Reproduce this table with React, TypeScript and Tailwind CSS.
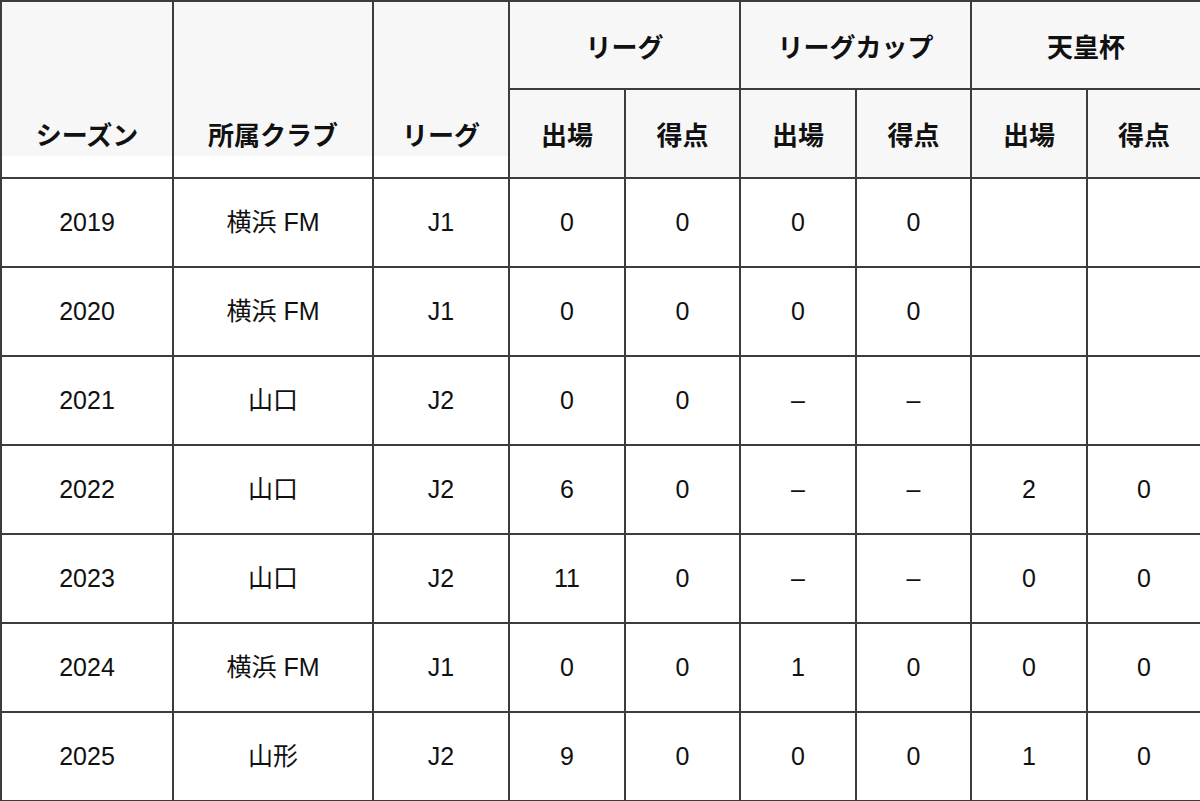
// Season-by-season appearance table (リーグ / リーグカップ / 天皇杯).
// Header cells use a light grey fill; data rows are plain white.

type Row = {
  season: string;
  club: string;
  league: string;
  stats: string[]; // 出場, 得点 × 3 competitions
};

const rows: Row[] = [
  { season: "2019", club: "横浜 FM", league: "J1", stats: ["0", "0", "0", "0", "", ""] },
  { season: "2020", club: "横浜 FM", league: "J1", stats: ["0", "0", "0", "0", "", ""] },
  { season: "2021", club: "山口", league: "J2", stats: ["0", "0", "–", "–", "", ""] },
  { season: "2022", club: "山口", league: "J2", stats: ["6", "0", "–", "–", "2", "0"] },
  { season: "2023", club: "山口", league: "J2", stats: ["11", "0", "–", "–", "0", "0"] },
  { season: "2024", club: "横浜 FM", league: "J1", stats: ["0", "0", "1", "0", "0", "0"] },
  { season: "2025", club: "山形", league: "J2", stats: ["9", "0", "0", "0", "1", "0"] },
];

const widths = [172, 200, 136, 116, 115, 116, 115, 116, 114];

const cell = "border-2 border-[#3c3c3c] p-0 text-center align-middle";

function SpanHead({ label }: { label: string }) {
  // rowspan header: grey fill stops a little short of the bottom line
  return (
    <th rowSpan={2} className={`${cell} bg-white align-top`}>
      <div className="flex h-[154px] items-end justify-center bg-[#f7f7f7] pb-[9px] leading-[26px]">
        {label}
      </div>
    </th>
  );
}

export default function App() {
  return (
    <div
      className="h-[801px] w-[1200px] overflow-hidden bg-white text-[#111]"
      style={{ fontFamily: '"Liberation Sans", "Noto Sans CJK JP", sans-serif' }}
    >
      <table className="w-[1200px] table-fixed border-collapse">
        <colgroup>
          {widths.map((w, i) => (
            <col key={i} style={{ width: w }} />
          ))}
        </colgroup>
        <thead
          className="text-[26px] font-bold"
          style={{ fontFamily: '"Noto Sans CJK JP", sans-serif' }}
        >
          <tr className="h-[88px]">
            <SpanHead label="シーズン" />
            <SpanHead label="所属クラブ" />
            <SpanHead label="リーグ" />
            <th colSpan={2} className={`${cell} bg-[#f7f7f7]`}>リーグ</th>
            <th colSpan={2} className={`${cell} bg-[#f7f7f7]`}>リーグカップ</th>
            <th colSpan={2} className={`${cell} bg-[#f7f7f7]`}>天皇杯</th>
          </tr>
          <tr className="h-[89px]">
            {["出場", "得点", "出場", "得点", "出場", "得点"].map((t, i) => (
              <th key={i} className={`${cell} bg-[#f7f7f7]`}>
                {t}
              </th>
            ))}
          </tr>
        </thead>
        <tbody className="text-[25px]">
          {rows.map((r) => (
            <tr key={r.season} className="h-[89px]">
              <td className={cell}>{r.season}</td>
              <td className={cell}>{r.club}</td>
              <td className={cell}>{r.league}</td>
              {r.stats.map((s, i) => (
                <td key={i} className={cell}>
                  {s}
                </td>
              ))}
            </tr>
          ))}
        </tbody>
      </table>
    </div>
  );
}
